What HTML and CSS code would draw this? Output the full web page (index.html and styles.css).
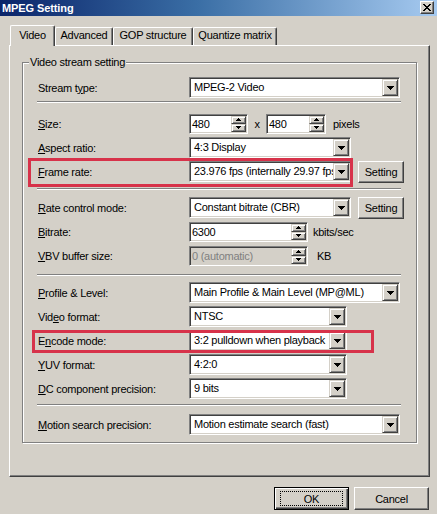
FILE: index.html
```html
<!DOCTYPE html>
<html>
<head>
<meta charset="utf-8">
<link rel="stylesheet" href="styles.css">
</head>
<body>
<div class="window">
  <div class="titlebar">
    <span class="title">MPEG Setting</span>
    <span class="close"><svg width="8" height="7" viewBox="0 0 8 7"><path d="M0 0h2v1h1v1h2V1h1V0h2v1H7v1H6v1H5v1h1v1h1v1h1v1H6V6H5V5H3v1H2v1H0V6h1V5h1V4h1V3H2V2H1V1H0z"/></svg></span>
  </div>

  <div class="tabs">
    <div class="tab active w-video">Video</div>
    <div class="tab w-adv">Advanced</div>
    <div class="tab w-gop">GOP structure</div>
    <div class="tab w-qm">Quantize matrix</div>
  </div>

  <div class="panel">
    <div class="group">
      <span class="legend">Video stream setting</span>

      <div class="row first">
        <span class="lbl">Stream t<u>y</u>pe:</span>
        <div class="combo w-full"><span class="val">MPEG-2 Video</span><span class="drop"><svg width="7" height="4" viewBox="0 0 7 4"><path d="M0 0H7V1H6V2H5V3H4V4H3V3H2V2H1V1H0Z"/></svg></span></div>
      </div>

      <div class="sep sep1"></div>

      <div class="row first">
        <span class="lbl"><u>S</u>ize:</span>
        <div class="edit w-size"><span class="val">480</span><span class="spin"><span class="sb"><svg width="5" height="3" viewBox="0 0 5 3"><path d="M2 0H3V1H4V2H5V3H0V2H1V1H2Z"/></svg></span><span class="sb"><svg width="5" height="3" viewBox="0 0 5 3"><path d="M0 0H5V1H4V2H3V3H2V2H1V1H0Z"/></svg></span></span></div>
        <span class="times">x</span>
        <div class="edit w-size2"><span class="val">480</span><span class="spin"><span class="sb"><svg width="5" height="3" viewBox="0 0 5 3"><path d="M2 0H3V1H4V2H5V3H0V2H1V1H2Z"/></svg></span><span class="sb"><svg width="5" height="3" viewBox="0 0 5 3"><path d="M0 0H5V1H4V2H3V3H2V2H1V1H0Z"/></svg></span></span></div>
        <span class="unit u-pixels">pixels</span>
      </div>

      <div class="row">
        <span class="lbl"><u>A</u>spect ratio:</span>
        <div class="combo w-mid"><span class="val">4:3 Display</span><span class="drop"><svg width="7" height="4" viewBox="0 0 7 4"><path d="M0 0H7V1H6V2H5V3H4V4H3V3H2V2H1V1H0Z"/></svg></span></div>
      </div>

      <div class="row">
        <span class="lbl"><u>F</u>rame rate:</span>
        <div class="combo w-mid"><span class="val">23.976 fps (internally 29.97 fps)</span><span class="drop"><svg width="7" height="4" viewBox="0 0 7 4"><path d="M0 0H7V1H6V2H5V3H4V4H3V3H2V2H1V1H0Z"/></svg></span></div>
        <div class="btn setting">Setting</div>
      </div>

      <div class="sep sep2"></div>

      <div class="row first">
        <span class="lbl"><u>R</u>ate control mode:</span>
        <div class="combo w-mid"><span class="val">Constant bitrate (CBR)</span><span class="drop"><svg width="7" height="4" viewBox="0 0 7 4"><path d="M0 0H7V1H6V2H5V3H4V4H3V3H2V2H1V1H0Z"/></svg></span></div>
        <div class="btn setting">Setting</div>
      </div>

      <div class="row">
        <span class="lbl"><u>B</u>itrate:</span>
        <div class="edit w-rate"><span class="val">6300</span><span class="spin"><span class="sb"><svg width="5" height="3" viewBox="0 0 5 3"><path d="M2 0H3V1H4V2H5V3H0V2H1V1H2Z"/></svg></span><span class="sb"><svg width="5" height="3" viewBox="0 0 5 3"><path d="M0 0H5V1H4V2H3V3H2V2H1V1H0Z"/></svg></span></span></div>
        <span class="unit u-kbits">kbits/sec</span>
      </div>

      <div class="row">
        <span class="lbl"><u>V</u>BV buffer size:</span>
        <div class="edit w-rate disabled"><span class="val">0 (automatic)</span><span class="spin"><span class="sb"><svg width="5" height="3" viewBox="0 0 5 3"><path d="M2 0H3V1H4V2H5V3H0V2H1V1H2Z"/></svg></span><span class="sb"><svg width="5" height="3" viewBox="0 0 5 3"><path d="M0 0H5V1H4V2H3V3H2V2H1V1H0Z"/></svg></span></span></div>
        <span class="unit u-kb">KB</span>
      </div>

      <div class="sep sep3"></div>

      <div class="row first">
        <span class="lbl"><u>P</u>rofile &amp; Level:</span>
        <div class="combo w-full"><span class="val">Main Profile &amp; Main Level (MP@ML)</span><span class="drop"><svg width="7" height="4" viewBox="0 0 7 4"><path d="M0 0H7V1H6V2H5V3H4V4H3V3H2V2H1V1H0Z"/></svg></span></div>
      </div>

      <div class="row">
        <span class="lbl">Vid<u>e</u>o format:</span>
        <div class="combo w-short"><span class="val">NTSC</span><span class="drop"><svg width="7" height="4" viewBox="0 0 7 4"><path d="M0 0H7V1H6V2H5V3H4V4H3V3H2V2H1V1H0Z"/></svg></span></div>
      </div>

      <div class="row">
        <span class="lbl">E<u>n</u>code mode:</span>
        <div class="combo w-short"><span class="val">3:2 pulldown when playback</span><span class="drop"><svg width="7" height="4" viewBox="0 0 7 4"><path d="M0 0H7V1H6V2H5V3H4V4H3V3H2V2H1V1H0Z"/></svg></span></div>
      </div>

      <div class="row">
        <span class="lbl"><u>Y</u>UV format:</span>
        <div class="combo w-short"><span class="val">4:2:0</span><span class="drop"><svg width="7" height="4" viewBox="0 0 7 4"><path d="M0 0H7V1H6V2H5V3H4V4H3V3H2V2H1V1H0Z"/></svg></span></div>
      </div>

      <div class="row">
        <span class="lbl"><u>D</u>C component precision:</span>
        <div class="combo w-short"><span class="val">9 bits</span><span class="drop"><svg width="7" height="4" viewBox="0 0 7 4"><path d="M0 0H7V1H6V2H5V3H4V4H3V3H2V2H1V1H0Z"/></svg></span></div>
      </div>

      <div class="sep sep4"></div>

      <div class="row first">
        <span class="lbl"><u>M</u>otion search precision:</span>
        <div class="combo w-full"><span class="val">Motion estimate search (fast)</span><span class="drop"><svg width="7" height="4" viewBox="0 0 7 4"><path d="M0 0H7V1H6V2H5V3H4V4H3V3H2V2H1V1H0Z"/></svg></span></div>
      </div>
    </div>
  </div>

  <div class="buttons">
    <div class="btn dlg default"><span class="focus">OK</span></div>
    <div class="btn dlg">Cancel</div>
  </div>

  <div class="mark mark-frame"></div>
  <div class="mark mark-encode"></div>
</div>
</body>
</html>
```

FILE: styles.css
```css
html, body {
  margin: 0;
  padding: 0;
}
body {
  background: #d4d0c8;
  font-family: "Liberation Sans", Arial, sans-serif;
  font-size: 11px;
  letter-spacing: -0.25px;
  color: #000;
}
.window {
  position: relative;
  width: 437px;
  height: 514px;
  overflow: hidden;
}
u { text-decoration: underline; text-underline-offset: 1px; }

/* title bar */
.titlebar {
  height: 16px;
  background: linear-gradient(to right, #0a246a 0%, #3a6ea5 45%, #a6caf0 100%);
  display: flex;
  align-items: center;
  justify-content: space-between;
  padding: 0 3px 0 2px;
}
.title {
  color: #fff;
  font-weight: bold;
  font-size: 11px;
  letter-spacing: -0.1px;
}
.close {
  width: 14px;
  height: 13px;
  box-sizing: border-box;
  background: #d4d0c8;
  border: 1px solid;
  border-color: #fff #404040 #404040 #fff;
  box-shadow: inset -1px -1px #808080;
  display: flex;
  align-items: center;
  justify-content: center;
  margin-top: -1px;
}
.close svg { display: block; }

/* tabs */
.tabs {
  display: flex;
  align-items: flex-end;
  height: 21px;
  margin: 9px 0 -1px 10px;
  position: relative;
  z-index: 1;
}
.tab {
  box-sizing: border-box;
  height: 18px;
  background: #d4d0c8;
  border-left: 1px solid #fff;
  border-top: 1px solid #fff;
  border-right: 1px solid #404040;
  box-shadow: inset -1px 0 #808080;
  border-radius: 2px 2px 0 0;
  text-align: center;
  line-height: 13px;
  padding-top: 1px;
  margin-bottom: 1px;
  white-space: nowrap;
}
.tab.active {
  height: 21px;
  padding-top: 3px;
  margin-bottom: 0;
}
.w-video { width: 45px; }
.w-adv { width: 58px; }
.w-gop { width: 80px; }
.w-qm { width: 84px; }

/* panel */
.panel {
  box-sizing: border-box;
  margin-left: 9px;
  width: 421px;
  height: 432px;
  border-left: 1px solid #fff;
  border-top: 1px solid #fff;
  border-right: 1px solid #404040;
  border-bottom: 1px solid #404040;
  box-shadow: inset -1px -1px #808080;
  padding: 16px 0 0 12px;
}

/* group box */
.group {
  position: relative;
  box-sizing: border-box;
  width: 395px;
  border: 1px solid #808080;
  box-shadow: inset 1px 1px #fff, 1px 1px #fff;
  padding: 14px 0 7px 14px;
}
.legend {
  position: absolute;
  top: -7px;
  left: 6px;
  padding: 0 1px;
  background: #d4d0c8;
  line-height: 13px;
}

.row {
  display: flex;
  align-items: center;
  height: 21px;
  margin-top: 3px;
}
.row.first { margin-top: 0; }
.lbl {
  width: 151px;
  padding-left: 1px;
  flex: none;
  white-space: nowrap;
}

.sep {
  width: 364px;
  height: 0;
  border-top: 1px solid #808080;
  border-bottom: 1px solid #fff;
}
.sep1 { margin: 3px 0 10px; }
.sep2 { margin: 6px 0 7px; }
.sep3 { margin: 8px 0 6px; }
.sep4 { margin: 5px 0 8px; }

/* combo */
.combo, .edit {
  display: flex;
  box-sizing: border-box;
  height: 21px;
  border: 1px solid;
  border-color: #808080 #fff #fff #808080;
  box-shadow: inset 1px 1px #404040, inset -1px -1px #d4d0c8;
  background: #fff;
  padding: 1px;
  flex: none;
}
.edit { height: 20px; }
.combo .val, .edit .val {
  flex: 1;
  min-width: 0;
  overflow: hidden;
  white-space: nowrap;
  padding-left: 3px;
  line-height: 17px;
}
.edit .val { padding-left: 1px; line-height: 16px; }
.w-full { width: 211px; }
.w-mid { width: 162px; }
.w-short { width: 158px; }
.w-size { width: 59px; }
.w-size2 { width: 60px; }
.w-rate { width: 119px; }

.drop {
  flex: none;
  width: 16px;
  box-sizing: border-box;
  background: #d4d0c8;
  border: 1px solid;
  border-color: #d4d0c8 #404040 #404040 #d4d0c8;
  box-shadow: inset 1px 1px #fff, inset -1px -1px #808080;
  display: flex;
  align-items: center;
  justify-content: center;
}
.drop svg, .sb svg { display: block; }

.spin {
  flex: none;
  width: 15px;
  display: flex;
  flex-direction: column;
}
.sb {
  flex: 1;
  box-sizing: border-box;
  background: #d4d0c8;
  border: 1px solid;
  border-color: #d4d0c8 #404040 #404040 #d4d0c8;
  box-shadow: inset 1px 1px #fff, inset -1px -1px #808080;
  display: flex;
  align-items: center;
  justify-content: center;
}
.edit.disabled { background: #d4d0c8; }
.edit.disabled .val { color: #808080; }

.times {
  width: 18px;
  text-align: center;
  flex: none;
}
.unit { flex: none; }
.u-pixels { margin-left: 7px; }
.u-kbits { margin-left: 5px; }
.u-kb { margin-left: 9px; }

/* buttons */
.btn {
  box-sizing: border-box;
  background: #d4d0c8;
  border: 1px solid;
  border-color: #fff #404040 #404040 #fff;
  box-shadow: inset -1px -1px #808080;
  display: flex;
  align-items: center;
  justify-content: center;
  flex: none;
}
.setting {
  width: 46px;
  height: 22px;
  margin-left: 7px;
}
.buttons {
  display: flex;
  justify-content: flex-end;
  gap: 5px;
  margin-top: 10px;
  padding-right: 8px;
}
.dlg {
  width: 75px;
  height: 23px;
}
.default {
  border: 1px solid #000;
  box-shadow: inset 1px 1px #fff, inset -1px -1px #404040, inset -2px -2px #808080;
}
.focus {
  box-sizing: border-box;
  width: 63px;
  height: 15px;
  border: 1px dotted #000;
  display: flex;
  align-items: center;
  justify-content: center;
}

/* red annotation rectangles */
.mark {
  position: absolute;
  box-sizing: border-box;
  border: 3px solid #d7324a;
}
.mark-frame {
  left: 28px;
  top: 158px;
  width: 325px;
  height: 29px;
}
.mark-encode {
  left: 32px;
  top: 330px;
  width: 342px;
  height: 23px;
}
```
